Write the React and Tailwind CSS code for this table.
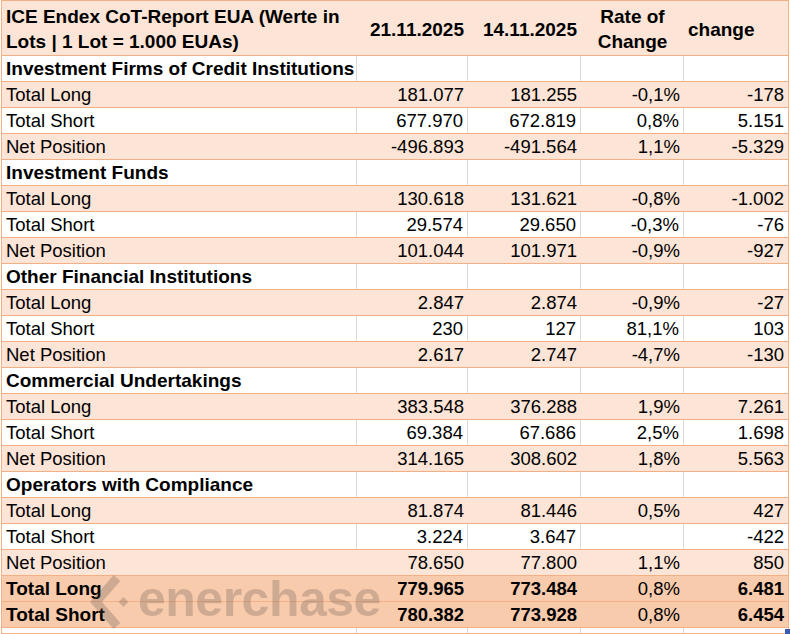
import React from "react";

const groups = [
  {
    title: "Investment Firms of Credit Institutions",
    rows: [
      ["Total Long", "181.077", "181.255", "-0,1%", "-178"],
      ["Total Short", "677.970", "672.819", "0,8%", "5.151"],
      ["Net Position", "-496.893", "-491.564", "1,1%", "-5.329"],
    ],
  },
  {
    title: "Investment Funds",
    rows: [
      ["Total Long", "130.618", "131.621", "-0,8%", "-1.002"],
      ["Total Short", "29.574", "29.650", "-0,3%", "-76"],
      ["Net Position", "101.044", "101.971", "-0,9%", "-927"],
    ],
  },
  {
    title: "Other Financial Institutions",
    rows: [
      ["Total Long", "2.847", "2.874", "-0,9%", "-27"],
      ["Total Short", "230", "127", "81,1%", "103"],
      ["Net Position", "2.617", "2.747", "-4,7%", "-130"],
    ],
  },
  {
    title: "Commercial Undertakings",
    rows: [
      ["Total Long", "383.548", "376.288", "1,9%", "7.261"],
      ["Total Short", "69.384", "67.686", "2,5%", "1.698"],
      ["Net Position", "314.165", "308.602", "1,8%", "5.563"],
    ],
  },
  {
    title: "Operators with Compliance",
    rows: [
      ["Total Long", "81.874", "81.446", "0,5%", "427"],
      ["Total Short", "3.224", "3.647", "", "-422"],
      ["Net Position", "78.650", "77.800", "1,1%", "850"],
    ],
  },
];

const totals = [
  ["Total Long", "779.965", "773.484", "0,8%", "6.481"],
  ["Total Short", "780.382", "773.928", "0,8%", "6.454"],
];

const cols = "grid grid-cols-[355px_111px_113px_103px_104px]";

function GroupTitle({ title }) {
  return (
    <div className={`${cols} h-[26px] border-b border-[#f4b084] bg-white`}>
      <div className="border-r border-[#dadada] pl-1 font-bold text-[19px] leading-[25px] whitespace-nowrap">{title}</div>
      <div className="border-r border-[#dadada]"></div>
      <div className="border-r border-[#dadada]"></div>
      <div className="border-r border-[#dadada]"></div>
      <div></div>
    </div>
  );
}

function DataRow({ row, peach }) {
  const line = peach ? "" : "border-r border-[#dadada]";
  return (
    <div className={`${cols} h-[26px] border-b border-[#f4b084] text-[18.5px] leading-[25px] ${peach ? "bg-[#fce4d6]" : "bg-white"}`}>
      <div className={`${line} pl-1`}>{row[0]}</div>
      <div className={`${line} pr-1 text-right`}>{row[1]}</div>
      <div className={`${line} pr-1 text-right`}>{row[2]}</div>
      <div className={`${line} pr-1 text-right`}>{row[3]}</div>
      <div className="pr-1 text-right">{row[4]}</div>
    </div>
  );
}

function TotalRow({ row }) {
  return (
    <div className={`${cols} h-[26px] border-b border-[#f4b084] bg-[#f8cbad] text-[18.5px] leading-[25px]`}>
      <div className="pl-1 font-bold text-[19px]">{row[0]}</div>
      <div className="pr-1 text-right font-bold">{row[1]}</div>
      <div className="pr-1 text-right font-bold">{row[2]}</div>
      <div className="pr-1 text-right">{row[3]}</div>
      <div className="pr-1 text-right font-bold">{row[4]}</div>
    </div>
  );
}

export default function App() {
  return (
    <div className="h-[634px] w-[791px] overflow-hidden bg-white text-black" style={{ fontFamily: '"Liberation Sans", Arial, sans-serif' }}>
      <div className="relative ml-px w-[788px] border-x border-t border-[#f4b084]">
        {/* header */}
        <div className={`${cols} h-[55px] border-b border-[#f4b084] bg-[#fce4d6] pt-[2px] font-bold text-[19px] leading-[25px]`}>
          <div className="flex items-center pl-1">
            <span>ICE Endex CoT-Report EUA (Werte in Lots | 1 Lot = 1.000 EUAs)</span>
          </div>
          <div className="flex items-center justify-end pr-1">21.11.2025</div>
          <div className="flex items-center justify-end pr-1">14.11.2025</div>
          <div className="flex items-center justify-center text-center">
            Rate of
            <br />
            Change
          </div>
          <div className="flex items-center pl-1">change</div>
        </div>

        {groups.map((g) => (
          <div key={g.title}>
            <GroupTitle title={g.title} />
            {g.rows.map((r, i) => (
              <DataRow key={r[0]} row={r} peach={i !== 1} />
            ))}
          </div>
        ))}

        {totals.map((r) => (
          <TotalRow key={r[0]} row={r} />
        ))}

        {/* partly visible next row */}
        <div className={`${cols} h-[6px] border-b border-[#f4b084] bg-white`}>
          <div className="border-r border-[#dadada]"></div>
          <div className="border-r border-[#dadada]"></div>
          <div className="border-r border-[#dadada]"></div>
          <div className="border-r border-[#dadada]"></div>
          <div></div>
        </div>

        {/* watermark */}
        <div className="pointer-events-none absolute left-[84px] top-[570px] flex items-start gap-[6px] opacity-25">
          <svg width="46" height="60" viewBox="0 0 46 60">
            <path d="M31 7 L10 31 L31 55" fill="none" stroke="#5a4a44" strokeWidth="9" />
            <rect x="34" y="27.5" width="7" height="7" transform="rotate(45 37.5 31)" fill="#5a4a44" />
          </svg>
          <span className="text-[50px] font-bold leading-[56px] tracking-[-0.5px] text-[#5a4a44]">enerchase</span>
        </div>

        {/* fill handle */}
        <div className="absolute bottom-0 right-[-2px] h-[5px] w-[5px] bg-[#3c5ab4]"></div>
      </div>
    </div>
  );
}
